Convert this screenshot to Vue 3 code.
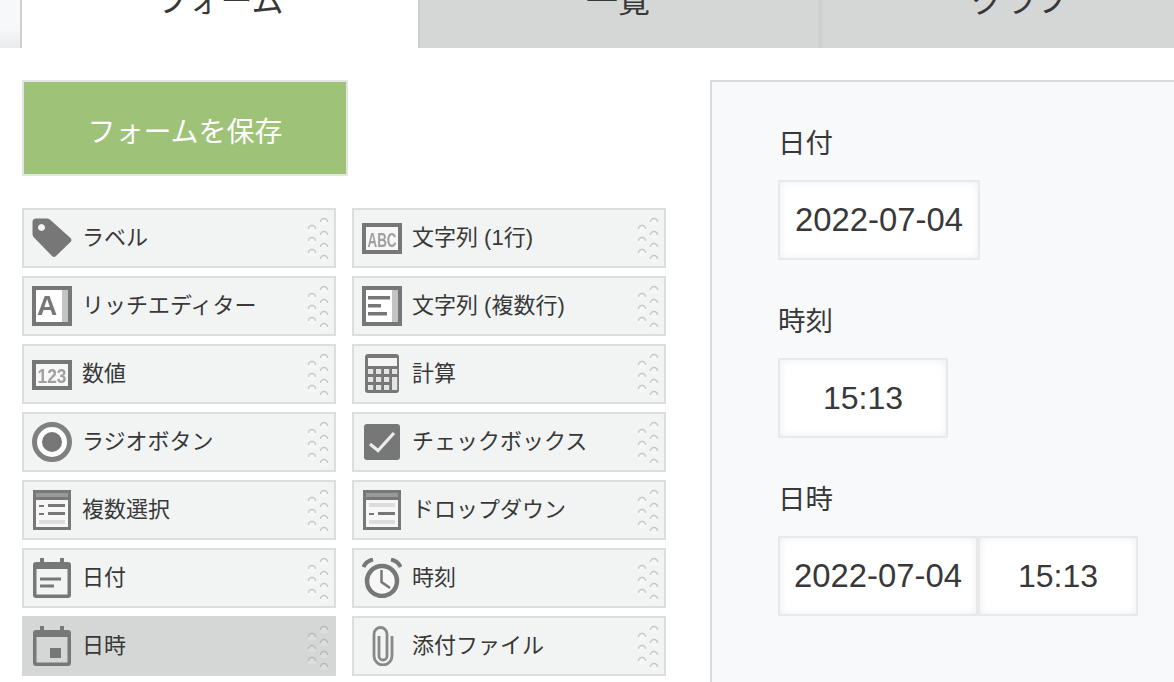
<script setup>
const tabs = ['フォーム', '一覧', 'グラフ']
const items = [
  { label: 'ラベル', icon: 'tag' },
  { label: '文字列 (1行)', icon: 'abc' },
  { label: 'リッチエディター', icon: 'rich' },
  { label: '文字列 (複数行)', icon: 'multiline' },
  { label: '数値', icon: 'num' },
  { label: '計算', icon: 'calc' },
  { label: 'ラジオボタン', icon: 'radio' },
  { label: 'チェックボックス', icon: 'check' },
  { label: '複数選択', icon: 'multi' },
  { label: 'ドロップダウン', icon: 'drop' },
  { label: '日付', icon: 'date' },
  { label: '時刻', icon: 'clock' },
  { label: '日時', icon: 'datetime', active: true },
  { label: '添付ファイル', icon: 'clip' }
]
const gripDots = [
  [6, 13], [6, 25], [6, 37],
  [18, 6], [18, 19], [18, 31], [18, 43]
]
const calcCols = [6, 14, 22]
const calcRows = [15, 23, 31]
</script>

<template>
  <div class="page">
    <div class="tabs">
      <div class="tab-gutter"></div>
      <div
        v-for="(tab, i) in tabs"
        :key="tab"
        class="tab"
        :class="{ current: i === 0 }"
      >{{ tab }}</div>
    </div>

    <div class="main">
      <div class="palette">
        <button class="save" type="button">フォームを保存</button>
        <div class="items">
          <div
            v-for="item in items"
            :key="item.label"
            class="item"
            :class="{ active: item.active }"
          >
            <svg class="icon" width="40" height="40" viewBox="0 0 40 40">
              <template v-if="item.icon === 'tag'">
                <path fill="#777" fill-rule="evenodd" d="M4 0.5H15Q17 0.5 19 2.5L38.5 20Q40.5 22 38.5 24L24 38Q22 40 20 38L2 19.5Q0.5 18 0.5 16V4Q0.5 0.5 4 0.5ZM9.5 6a3.5 3.5 0 1 0 0.01 0Z" />
              </template>
              <template v-else-if="item.icon === 'abc'">
                <rect x="2" y="7" width="36" height="27" fill="#f7f7f7" stroke="#777" stroke-width="4" />
                <text class="mono" x="20" y="28.5" text-anchor="middle" textLength="29" lengthAdjust="spacingAndGlyphs">ABC</text>
              </template>
              <template v-else-if="item.icon === 'rich'">
                <rect x="2" y="2" width="36" height="36" fill="#fff" stroke="#777" stroke-width="4" />
                <rect x="30" y="4" width="6" height="32" fill="#c4c4c4" />
                <text class="bold-a" x="15" y="29" text-anchor="middle">A</text>
              </template>
              <template v-else-if="item.icon === 'multiline'">
                <rect x="2" y="2" width="36" height="36" fill="#fff" stroke="#777" stroke-width="4" />
                <rect x="30" y="4" width="6" height="32" fill="#c4c4c4" />
                <rect x="6" y="10" width="22" height="3.5" fill="#777" />
                <rect x="6" y="18" width="13" height="3.5" fill="#777" />
                <rect x="6" y="26" width="19" height="3.5" fill="#777" />
              </template>
              <template v-else-if="item.icon === 'num'">
                <rect x="2" y="8" width="36" height="26" fill="#f7f7f7" stroke="#777" stroke-width="4" />
                <text class="mono" x="20" y="28.5" text-anchor="middle" textLength="29" lengthAdjust="spacingAndGlyphs">123</text>
              </template>
              <template v-else-if="item.icon === 'calc'">
                <rect x="3" y="0" width="34" height="39" rx="3" fill="#777" />
                <rect x="6" y="4" width="29" height="8" fill="#f4f4f4" />
                <template v-for="c in calcCols" :key="c">
                  <rect v-for="r in calcRows" :key="r" :x="c" :y="r" width="5.2" height="5" fill="#e4e4e4" />
                </template>
                <rect x="30" y="15" width="5.2" height="5" fill="#e4e4e4" />
                <rect x="30" y="23" width="5.2" height="13" fill="#e4e4e4" />
              </template>
              <template v-else-if="item.icon === 'radio'">
                <circle cx="20" cy="20" r="17.5" fill="#fff" stroke="#808080" stroke-width="5" />
                <circle cx="20" cy="20" r="10" fill="#777" />
              </template>
              <template v-else-if="item.icon === 'check'">
                <rect x="2" y="2" width="36" height="36" rx="3" fill="#777" />
                <path d="M8 22L16 28.5L32 11" fill="none" stroke="#ececec" stroke-width="3.2" />
              </template>
              <template v-else-if="item.icon === 'multi'">
                <rect x="1" y="0" width="38" height="40" fill="#777" />
                <rect x="4" y="3" width="32" height="4" fill="#999" />
                <rect x="4" y="10" width="32" height="27" fill="#f7f7f7" />
                <rect x="16" y="14" width="17" height="3" fill="#777" />
                <rect x="16" y="22" width="17" height="3" fill="#777" />
                <rect x="7" y="15" width="5" height="2" fill="#777" />
                <rect x="7" y="23" width="5" height="2" fill="#777" />
                <rect x="7" y="30" width="26" height="4" fill="#ddd" />
              </template>
              <template v-else-if="item.icon === 'drop'">
                <rect x="1" y="0" width="38" height="40" fill="#777" />
                <rect x="4" y="3" width="32" height="4" fill="#999" />
                <rect x="4" y="10" width="32" height="27" fill="#f7f7f7" />
                <rect x="7" y="13" width="26" height="4" fill="#ddd" />
                <rect x="16" y="22" width="17" height="3" fill="#777" />
                <rect x="7" y="23" width="5" height="2" fill="#777" />
                <rect x="7" y="30" width="26" height="4" fill="#ddd" />
              </template>
              <template v-else-if="item.icon === 'date'">
                <path fill="#777" fill-rule="evenodd" d="M8 0H12V4H28V0H32V4H36Q39 4 39 7V37Q39 40 36 40H4Q1 40 1 37V7Q1 4 4 4H8ZM4.5 11V36.5H35.5V11ZM8 19.5H29V22.5H8ZM8 26.5H22V29.5H8Z" />
              </template>
              <template v-else-if="item.icon === 'datetime'">
                <path fill="#777" fill-rule="evenodd" d="M8 0H12V4H28V0H32V4H36Q39 4 39 7V37Q39 40 36 40H4Q1 40 1 37V7Q1 4 4 4H8ZM4.5 11V36.5H35.5V11Z" />
                <rect x="18" y="22" width="11" height="10" fill="#777" />
              </template>
              <template v-else-if="item.icon === 'clock'">
                <circle cx="20" cy="23" r="15" fill="#f7f7f7" stroke="#777" stroke-width="4.5" />
                <path d="M19.5 12V24L28 30" fill="none" stroke="#777" stroke-width="2.5" />
                <path d="M1.5 9Q4 3 11 1.5M38.5 9Q36 3 29 1.5" fill="none" stroke="#777" stroke-width="4" />
              </template>
              <template v-else-if="item.icon === 'clip'">
                <path d="M30 10V30A9 9 0 0 1 12 30V8A6.5 6.5 0 0 1 25 8V30A4 4 0 0 1 17 30V10" fill="none" stroke="#888" stroke-width="2.8" />
              </template>
            </svg>
            <span class="item-label">{{ item.label }}</span>
            <svg class="grip" width="24" height="48" viewBox="0 0 24 48">
              <path
                v-for="d in gripDots"
                :key="d.join()"
                class="grip-dot"
                :d="`M${d[0] - 3.5} ${d[1] + 2}A3.5 3.5 0 0 1 ${d[0] + 3.5} ${d[1] + 2}V${d[1] + 5}H${d[0] - 3.5}Z`"
              />
              <path
                v-for="d in gripDots"
                :key="d.join() + 'a'"
                class="grip-arc"
                :d="`M${d[0] - 3.5} ${d[1] + 2}A3.5 3.5 0 0 1 ${d[0] + 3.5} ${d[1] + 2}`"
              />
            </svg>
          </div>
        </div>
      </div>

      <div class="preview">
        <div class="field">
          <div class="field-label">日付</div>
          <div class="inputs"><div class="input date">2022-07-04</div></div>
        </div>
        <div class="field">
          <div class="field-label">時刻</div>
          <div class="inputs"><div class="input time-alone">15:13</div></div>
        </div>
        <div class="field">
          <div class="field-label">日時</div>
          <div class="inputs">
            <div class="input date date-part">2022-07-04</div>
            <div class="input time-part">15:13</div>
          </div>
        </div>
      </div>
    </div>
  </div>
</template>

<style>
html, body { margin: 0; background: #fff; overflow: hidden; }
</style>

<style scoped>
.page {
  width: 1174px;
  height: 682px;
  overflow: hidden;
  background: #fff;
  color: #383838;
  font-family: "Liberation Sans", "Noto Sans CJK JP", sans-serif;
}
.tabs {
  display: flex;
  height: 48px;
  overflow: hidden;
}
.tab-gutter {
  width: 20px;
  flex: none;
  background: linear-gradient(#f6f8fa 60%, #e9eaeb);
  border-right: 2px solid #cdcfd0;
}
.tab {
  flex: none;
  width: 402px;
  box-sizing: border-box;
  height: 48px;
  padding-bottom: 31px;
  display: flex;
  align-items: flex-end;
  justify-content: center;
  font-size: 32px;
  line-height: 32px;
  background: #d5d7d6;
  border-right: 2px solid #cfd1d0;
  box-shadow: inset 3px 0 3px -2px rgba(0, 0, 0, 0.08);
}
.tab.current {
  width: 396px;
  background: #fff;
  border-right: 0;
  box-shadow: none;
}
.main {
  display: flex;
  align-items: flex-start;
  padding: 32px 0 0 22px;
}
.palette {
  flex: none;
  width: 644px;
}
.save {
  display: block;
  box-sizing: border-box;
  width: 326px;
  height: 96px;
  margin: 0 0 32px;
  padding: 3px 0 0;
  border: 2px solid #e2e6e2;
  background: #9dc278;
  color: #fff;
  font: inherit;
  font-size: 28px;
}
.items {
  display: grid;
  grid-template-columns: 314px 314px;
  column-gap: 16px;
  row-gap: 8px;
}
.item {
  box-sizing: border-box;
  height: 60px;
  display: flex;
  align-items: center;
  padding: 0 4px 0 8px;
  border: 2px solid #dcdedd;
  background: #f2f4f3;
}
.item.active {
  background: #d5d7d6;
  border-color: #d5d7d6;
}
.icon {
  flex: none;
  margin-right: 10px;
  filter: blur(0.35px);
}
.item-label {
  flex: 1;
  font-size: 22px;
  line-height: 30px;
  white-space: nowrap;
}
.grip {
  flex: none;
}
.grip-dot {
  fill: #f8f9f8;
  opacity: 0.55;
}
.active .grip-dot {
  opacity: 0.2;
}
.grip-arc {
  fill: none;
  stroke: #c6c8c8;
  stroke-width: 1.4;
}
.active .grip-arc {
  stroke: #b8baba;
}
.mono {
  font-family: "Liberation Sans", sans-serif;
  font-weight: 700;
  font-size: 21px;
  fill: #a0a0a0;
}
.bold-a {
  font-family: "Liberation Sans", sans-serif;
  font-weight: 700;
  font-size: 28px;
  fill: #777;
}
.preview {
  flex: none;
  box-sizing: border-box;
  width: 520px;
  height: 640px;
  margin-left: 44px;
  padding: 42px 0 0 66px;
  background: #f8f9fb;
  border: 2px solid #d8dadc;
  display: flex;
  flex-direction: column;
  gap: 42px;
}
.field-label {
  height: 40px;
  margin-bottom: 16px;
  font-size: 27.5px;
  line-height: 40px;
}
.inputs {
  display: flex;
}
.input {
  box-sizing: border-box;
  height: 80px;
  display: flex;
  align-items: center;
  justify-content: center;
  border: 2px solid #e7e9ea;
  background: #fff;
  box-shadow: inset 0 0 8px rgba(0, 0, 0, 0.07);
  font-size: 32px;
  white-space: nowrap;
}
.date { width: 202px; font-size: 32.8px; }
.time-alone { width: 170px; }
.date-part { width: 200px; }
.time-part { width: 160px; }
</style>
